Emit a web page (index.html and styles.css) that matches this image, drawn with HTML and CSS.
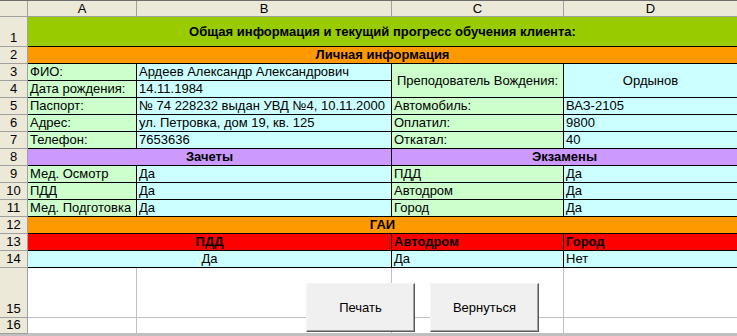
FILE: index.html
```html
<!DOCTYPE html>
<html lang="ru">
<head>
<meta charset="utf-8">
<title>Клиент</title>
<link rel="stylesheet" href="styles.css">
</head>
<body>
<div class="screen">
  <div class="sheet">
    <div class="hd corner"></div>
    <div class="hd">A</div>
    <div class="hd">B</div>
    <div class="hd">C</div>
    <div class="hd">D</div>

    <div class="rh">1</div>
    <div class="c g b ctr mid span4">Общая информация и текущий прогресс обучения клиента:</div>

    <div class="rh">2</div>
    <div class="c o b ctr span4">Личная информация</div>

    <div class="rh">3</div>
    <div class="c lg">ФИО:</div>
    <div class="c cy">Ардеев Александр Александрович</div>
    <div class="c lg ctr mid rows2">Преподователь Вождения:</div>
    <div class="c cy ctr mid rows2">Ордынов</div>

    <div class="rh">4</div>
    <div class="c lg">Дата рождения:</div>
    <div class="c cy">14.11.1984</div>

    <div class="rh">5</div>
    <div class="c lg">Паспорт:</div>
    <div class="c cy">№ 74 228232 выдан УВД №4, 10.11.2000</div>
    <div class="c lg">Автомобиль:</div>
    <div class="c cy">ВАЗ-2105</div>

    <div class="rh">6</div>
    <div class="c lg">Адрес:</div>
    <div class="c cy">ул. Петровка, дом 19, кв. 125</div>
    <div class="c lg">Оплатил:</div>
    <div class="c cy">9800</div>

    <div class="rh">7</div>
    <div class="c lg">Телефон:</div>
    <div class="c cy">7653636</div>
    <div class="c lg">Откатал:</div>
    <div class="c cy">40</div>

    <div class="rh">8</div>
    <div class="c pu b ctr span2">Зачеты</div>
    <div class="c pu b ctr span2">Экзамены</div>

    <div class="rh">9</div>
    <div class="c lg">Мед. Осмотр</div>
    <div class="c cy">Да</div>
    <div class="c lg">ПДД</div>
    <div class="c cy">Да</div>

    <div class="rh">10</div>
    <div class="c lg">ПДД</div>
    <div class="c cy">Да</div>
    <div class="c lg">Автодром</div>
    <div class="c cy">Да</div>

    <div class="rh">11</div>
    <div class="c lg">Мед. Подготовка</div>
    <div class="c cy">Да</div>
    <div class="c lg">Город</div>
    <div class="c cy">Да</div>

    <div class="rh">12</div>
    <div class="c o b ctr span4">ГАИ</div>

    <div class="rh">13</div>
    <div class="c rd b ctr span2">ПДД</div>
    <div class="c rd b">Автодром</div>
    <div class="c rd b">Город</div>

    <div class="rh">14</div>
    <div class="c cy ctr span2">Да</div>
    <div class="c cy">Да</div>
    <div class="c cy">Нет</div>

    <div class="rh">15</div>
    <div class="c w"></div>
    <div class="c w"></div>
    <div class="c w"></div>
    <div class="c w"></div>

    <div class="rh">16</div>
    <div class="c w"></div>
    <div class="c w"></div>
    <div class="c w"></div>
    <div class="c w"></div>
  </div>
  <div class="band"></div>

  <button class="btn btn-print" type="button">Печать</button>
  <button class="btn btn-back" type="button">Вернуться</button>
</div>
</body>
</html>
```
FILE: styles.css
```css
html, body {
  margin: 0;
  padding: 0;
  background: #ffffff;
  overflow: hidden;
}

.screen {
  position: relative;
  width: 737px;
  height: 336px;
  overflow: hidden;
  font-family: "Liberation Sans", Arial, sans-serif;
  font-size: 13px;
  color: #000;
}

.sheet {
  display: grid;
  grid-template-columns: 28px 109px 255px 172px 174px;
  grid-template-rows: 16px 30px repeat(13, 17px) 50px 16px;
  width: 738px;
  border-top: 1px solid #6e6e6e;
}

.sheet > div {
  box-sizing: border-box;
  overflow: hidden;
  white-space: nowrap;
}

.hd {
  background: #ece9d8;
  border-right: 1px solid #a0a0a0;
  border-bottom: 1px solid #a0a0a0;
  display: flex;
  align-items: center;
  justify-content: center;
  line-height: 15px;
}

.rh {
  grid-column: 1;
  background: #ece9d8;
  border-right: 1px solid #a0a0a0;
  border-bottom: 1px solid #a0a0a0;
  display: flex;
  align-items: flex-end;
  justify-content: center;
  line-height: 15px;
  padding-bottom: 1px;
}

.c {
  border-right: 1px solid #000;
  border-bottom: 1px solid #000;
  display: flex;
  align-items: flex-end;
  padding: 0 2px 1px 2px;
  line-height: 15px;
}

.c.mid { align-items: center; padding-bottom: 0; }
.c.ctr { justify-content: center; }
.b { font-weight: bold; }

.span4 { grid-column: span 4; }
.span2 { grid-column: span 2; }
.rows2 { grid-row: span 2; }

.g  { background: #99cc00; }
.o  { background: #ff9900; }
.lg { background: #ccffcc; }
.cy { background: #ccffff; }
.pu { background: #cc99ff; }
.rd { background: #ff0000; }
.w  {
  background: #ffffff;
  border-right-color: #c0c0c0;
  border-bottom-color: #c0c0c0;
}

.band {
  height: 4px;
  background: #c0c0c0;
}

.btn {
  position: absolute;
  top: 283px;
  width: 109px;
  height: 49px;
  box-sizing: border-box;
  margin: 0;
  padding: 0;
  background: #f0f0f0;
  border: 1px solid;
  border-color: #f4f4f4 #5a5a5a #5a5a5a #f4f4f4;
  box-shadow: inset -1px -1px 0 #a0a0a0;
  font-family: "Liberation Sans", Arial, sans-serif;
  font-size: 13px;
  color: #000;
  text-align: center;
}

.btn-print { left: 306px; }
.btn-back  { left: 430px; }
```
